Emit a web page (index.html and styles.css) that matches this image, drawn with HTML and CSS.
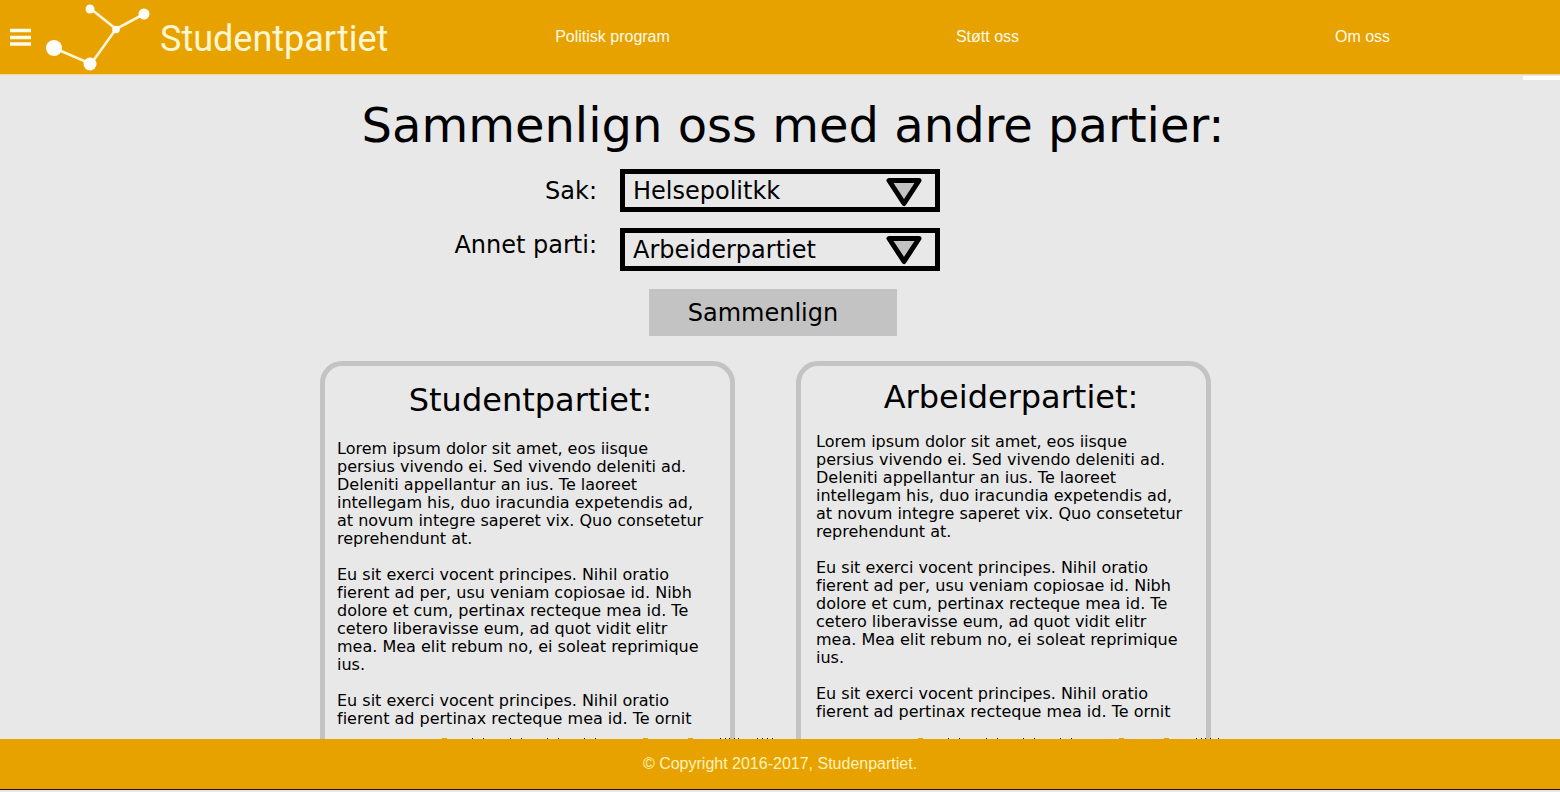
FILE: index.html
```html
<!DOCTYPE html>
<html lang="no">
<head>
<meta charset="utf-8">
<title>Studentpartiet</title>
<link rel="stylesheet" href="styles.css">
</head>
<body>
<header class="topbar">
  <div class="brand">
    <button class="menu" type="button" aria-label="Meny">
      <svg width="21" height="18" viewBox="0 0 21 18"><path d="M0 2.500h21M0 9.500h21M0 16h21" stroke="#fffbea" stroke-width="3.600"/></svg>
    </button>
    <a class="home" href="#">
      <svg class="logo" width="106" height="70" viewBox="0 0 106 70" aria-hidden="true">
        <path d="M9 46 46 62 71 27 99 12M71 27 46 7" fill="none" stroke="#fff6d8" stroke-width="2.600"/>
        <g fill="#fffefa"><circle cx="9" cy="46" r="8"/><circle cx="45" cy="62" r="6.500"/><circle cx="71" cy="27.500" r="3.800"/><circle cx="99" cy="12" r="5.500"/><circle cx="45" cy="7" r="4.500"/></g>
      </svg>
      <span class="name">Studentpartiet</span>
    </a>
  </div>
  <nav class="nav">
    <a href="#">Politisk program</a>
    <a href="#">Støtt oss</a>
    <a href="#">Om oss</a>
  </nav>
  <span class="edge"></span>
</header>
<main class="content">
  <h1 class="title">Sammenlign oss med andre partier:</h1>
  <form class="compare">
    <label class="label" for="sak">Sak:</label>
    <div class="picker">
      <select id="sak" class="select"><option>Helsepolitkk</option></select>
      <svg class="arrow" width="36" height="30" viewBox="0 0 36 30"><path d="M3 3.500H33L18 26.500Z" fill="#c3c3c3" stroke="#000" stroke-width="5" stroke-linejoin="round"/></svg>
    </div>
    <label class="label raised" for="parti">Annet parti:</label>
    <div class="picker">
      <select id="parti" class="select"><option>Arbeiderpartiet</option></select>
      <svg class="arrow" width="36" height="30" viewBox="0 0 36 30"><path d="M3 2.500H33L18 25.500Z" fill="#c3c3c3" stroke="#000" stroke-width="5" stroke-linejoin="round"/></svg>
    </div>
    <button class="submit" type="button">Sammenlign</button>
  </form>
  <div class="cards">
    <section class="card">
      <h2 class="party">Studentpartiet:</h2>
      <p>Lorem ipsum dolor sit amet, eos iisque<br>persius vivendo ei. Sed vivendo deleniti ad.<br>Deleniti appellantur an ius. Te laoreet<br>intellegam his, duo iracundia expetendis ad,<br>at novum integre saperet vix. Quo consetetur<br>reprehendunt at.</p>
      <p>Eu sit exerci vocent principes. Nihil oratio<br>fierent ad per, usu veniam copiosae id. Nibh<br>dolore et cum, pertinax recteque mea id. Te<br>cetero liberavisse eum, ad quot vidit elitr<br>mea. Mea elit rebum no, ei soleat reprimique<br>ius.</p>
      <p>Eu sit exerci vocent principes. Nihil oratio<br>fierent ad pertinax recteque mea id. Te ornit</p>
      <svg class="cut" width="460" height="1" viewBox="0 0 460 1"><path d="M122 .5h5M323 .5h5M368 .5h5" stroke="#e8a200"/><path d="M152 .5h1M163 .5h1M190 .5h1M201 .5h1M227 .5h1M238 .5h1M264 .5h1M275 .5h1M400 .5h1M405 .5h1M409 .5h1M414 .5h1M418 .5h1M437 .5h1M442 .5h1M447 .5h1M452 .5h1" stroke="#000"/></svg>
    </section>
    <section class="card other">
      <h2 class="party">Arbeiderpartiet:</h2>
      <p>Lorem ipsum dolor sit amet, eos iisque<br>persius vivendo ei. Sed vivendo deleniti ad.<br>Deleniti appellantur an ius. Te laoreet<br>intellegam his, duo iracundia expetendis ad,<br>at novum integre saperet vix. Quo consetetur<br>reprehendunt at.</p>
      <p>Eu sit exerci vocent principes. Nihil oratio<br>fierent ad per, usu veniam copiosae id. Nibh<br>dolore et cum, pertinax recteque mea id. Te<br>cetero liberavisse eum, ad quot vidit elitr<br>mea. Mea elit rebum no, ei soleat reprimique<br>ius.</p>
      <p>Eu sit exerci vocent principes. Nihil oratio<br>fierent ad pertinax recteque mea id. Te ornit</p>
      <svg class="cut" width="460" height="1" viewBox="0 0 460 1"><path d="M122 .5h5M323 .5h5M368 .5h5" stroke="#e8a200"/><path d="M152 .5h1M163 .5h1M190 .5h1M201 .5h1M227 .5h1M238 .5h1M264 .5h1M275 .5h1M400 .5h1M405 .5h1M409 .5h1M414 .5h1M422 .5h1" stroke="#000"/></svg>
    </section>
  </div>
</main>
<footer class="footer">© Copyright 2016-2017, Studenpartiet.</footer>
</body>
</html>
```
FILE: styles.css
```css
* { box-sizing: border-box; }
body {
  margin: 0;
  height: 100vh;
  display: flex;
  flex-direction: column;
  background: #e8e8e8;
  color: #000;
  font-family: "DejaVu Sans", Verdana, sans-serif;
  font-variant-ligatures: none;
  overflow: hidden;
}
.topbar {
  position: relative;
  flex: none;
  display: flex;
  height: 74px;
  padding-right: 10px;
  background: #e8a200;
  box-shadow: 0 1px 1px #f3d794;
  font-family: "Liberation Sans", Arial, sans-serif;
}
.edge {
  position: absolute;
  right: 0;
  top: 76px;
  width: 37px;
  height: 4px;
  background: #fff;
}
.brand { display: flex; align-items: center; width: 425px; padding-left: 10px; }
.menu { display: flex; padding: 0; border: 0; background: none; }
.home { display: flex; align-items: center; margin-left: 14px; text-decoration: none; }
.logo { display: block; }
.name { margin-left: 9px; padding-top: 3px; font: 36px/44px Roboto, sans-serif; color: #fff6d2; }
.nav { flex: 1; display: grid; grid-template-columns: repeat(3, 1fr); align-items: center; text-align: center; }
.nav a { color: #fffbe8; font-size: 16px; text-decoration: none; }
.content { flex: 1; min-height: 0; overflow: hidden; }
.title {
  margin: 21px 0 0;
  padding-left: 26px;
  font-size: 48px;
  line-height: 60px;
  font-weight: 400;
  text-align: center;
}
.compare {
  display: grid;
  grid-template-columns: 1fr 320px 1fr;
  column-gap: 23px;
  row-gap: 16px;
  align-items: center;
  margin-top: 14px;
  font-size: 24px;
}
.label { grid-column: 1; line-height: 34px; text-align: right; }
.raised { align-self: start; }
.picker { grid-column: 2; position: relative; }
.select {
  display: block;
  width: 100%;
  height: 43px;
  padding: 0 8px;
  border: 5px solid #000;
  border-radius: 0;
  background: #e8e8e8;
  color: #000;
  font: inherit;
  appearance: none;
}
.arrow { position: absolute; right: 18px; top: 8px; pointer-events: none; }
.submit {
  grid-column: 2;
  justify-self: center;
  width: 248px;
  height: 47px;
  margin: 2px 14px 0 0;
  padding: 0 20px 0 0;
  border: 0;
  background: #c3c3c3;
  color: #000;
  font: inherit;
}
.cards { display: flex; justify-content: center; gap: 61px; margin-top: 25px; padding-right: 29px; }
.card {
  position: relative;
  width: 415px;
  height: 500px;
  padding: 16px 0 0 12px;
  border: 5px solid #c3c3c3;
  border-radius: 22px;
  font-size: 16px;
  line-height: 18px;
}
.party { margin: 0 0 22px; padding-right: 6px; font-size: 32px; line-height: 36px; font-weight: 400; text-align: center; }
.card p { margin: 0 0 18px; white-space: nowrap; }
.other { padding: 13px 0 0 15px; }
.other .party { margin-bottom: 18px; padding-right: 0; }
.cut { position: absolute; left: -5px; top: 372px; }
.footer {
  flex: none;
  height: 53px;
  padding-top: 15px;
  background: linear-gradient(#e8a200 0 50px, #201000 50px 51px, #e8e8e8 51px);
  color: #fff4bd;
  font: 16px/20px "Liberation Sans", Arial, sans-serif;
  text-align: center;
}
```
